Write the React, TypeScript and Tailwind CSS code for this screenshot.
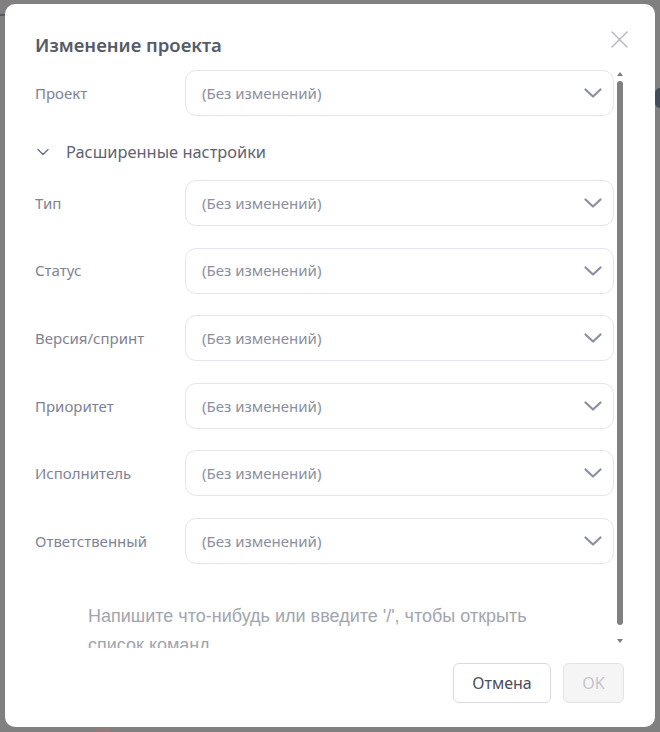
const fields = ["Тип", "Статус", "Версия/спринт", "Приоритет", "Исполнитель", "Ответственный"];

function Chevron() {
  return (
    <svg width="18" height="10" viewBox="0 0 18 10" fill="none" className="shrink-0">
      <polyline points="1.5,1.5 9,8.5 16.5,1.5" stroke="#8b90a1" strokeWidth="2.2" strokeLinecap="round" strokeLinejoin="round" />
    </svg>
  );
}

function SelectRow({ label }: { label: string }) {
  return (
    <div className="flex items-center h-[46px]">
      <span className="w-[150px] shrink-0 text-[15px] text-[#7e8394]">{label}</span>
      <div className="flex-1 h-full flex items-center justify-between pl-[16px] pr-[11px] border border-[#e4e6ef] rounded-[11px] bg-white">
        <span className="text-[15px] text-[#8b90a1]">(Без изменений)</span>
        <Chevron />
      </div>
    </div>
  );
}

function Scrollbar() {
  return (
    <div className="w-[6px] shrink-0 flex flex-col items-center pt-[6px] pb-[5px]">
      <svg width="6" height="4" viewBox="0 0 6 4">
        <polygon points="0,4 3,0 6,4" fill="#7d7d7d" />
      </svg>
      <div className="w-[6px] flex-1 mt-[5px] mb-[14px] rounded-full bg-[#808080]" />
      <svg width="6" height="4" viewBox="0 0 6 4">
        <polygon points="0,0 6,0 3,4" fill="#7d7d7d" />
      </svg>
    </div>
  );
}

export default function App() {
  return (
    <div
      className="w-[660px] h-[732px] bg-[#808080] pt-[4px] pl-[5px] relative overflow-hidden"
      style={{ fontFamily: '"Noto Sans", "Open Sans", sans-serif' }}
    >
      {/* обрывки страницы под затемнением */}
      <div className="absolute left-0 top-[14px] w-[5px] h-[2px] bg-[#4f5866]" />
      <div className="absolute left-[655px] top-[88px] w-[5px] h-[20px] rounded-l-full bg-[#444c58]" />
      <div className="absolute left-[95px] top-[728px] w-[16px] h-[4px] bg-[#8f7c78]" />

      <div className="w-[650px] h-[723px] bg-white rounded-[10px] flex flex-col relative">
        {/* шапка */}
        <div className="flex items-start justify-between pl-[30px] pr-[27px] pt-[28px] h-[62px]">
          <h2 className="text-[18.5px] font-semibold text-[#575b68] leading-[26px]">Изменение проекта</h2>
          <svg width="17" height="17" viewBox="0 0 17 17" fill="none" className="mt-[-1px]">
            <path d="M1 1 L16 16 M16 1 L1 16" stroke="#b5b7be" strokeWidth="1.4" strokeLinecap="round" />
          </svg>
        </div>

        {/* тело */}
        <div className="flex h-[582px] pl-[30px] pr-[32px] overflow-hidden">
          <div className="flex-1 pt-[4px] pr-[3px] overflow-hidden">
            <SelectRow label="Проект" />

            <div className="flex items-center h-[24px] mt-[24px] pl-[2px]">
              <svg width="12" height="8" viewBox="0 0 12 8" fill="none">
                <polyline points="1,1.5 6,6.5 11,1.5" stroke="#6a6f7e" strokeWidth="1.4" strokeLinecap="round" strokeLinejoin="round" />
              </svg>
              <span className="ml-[17px] text-[16.4px] text-[#5f6371]">Расширенные настройки</span>
            </div>

            <div className="mt-[16px] flex flex-col gap-[21.6px]">
              {fields.map((f) => (
                <SelectRow key={f} label={f} />
              ))}
            </div>

            <p
              className="mt-[38px] pl-[53px] pr-[40px] text-[18px] leading-[29px] text-[#a2a5ad]"
              style={{ fontFamily: '"Liberation Sans", Arial, sans-serif' }}
            >
              Напишите что-нибудь или введите '/', чтобы открыть список команд...
            </p>
          </div>
          <Scrollbar />
        </div>

        {/* подвал */}
        <div className="flex justify-end gap-[12px] pt-[15px] pr-[31px]">
          <button className="w-[98px] h-[40px] rounded-[6px] border border-[#d8dae0] bg-white text-[16px] text-[#4a4e5a]">
            Отмена
          </button>
          <button className="w-[61px] h-[40px] rounded-[6px] border border-[#e2e3e6] bg-[#f5f5f6] text-[16px] text-[#c3c5ca]">
            OK
          </button>
        </div>
      </div>
    </div>
  );
}
